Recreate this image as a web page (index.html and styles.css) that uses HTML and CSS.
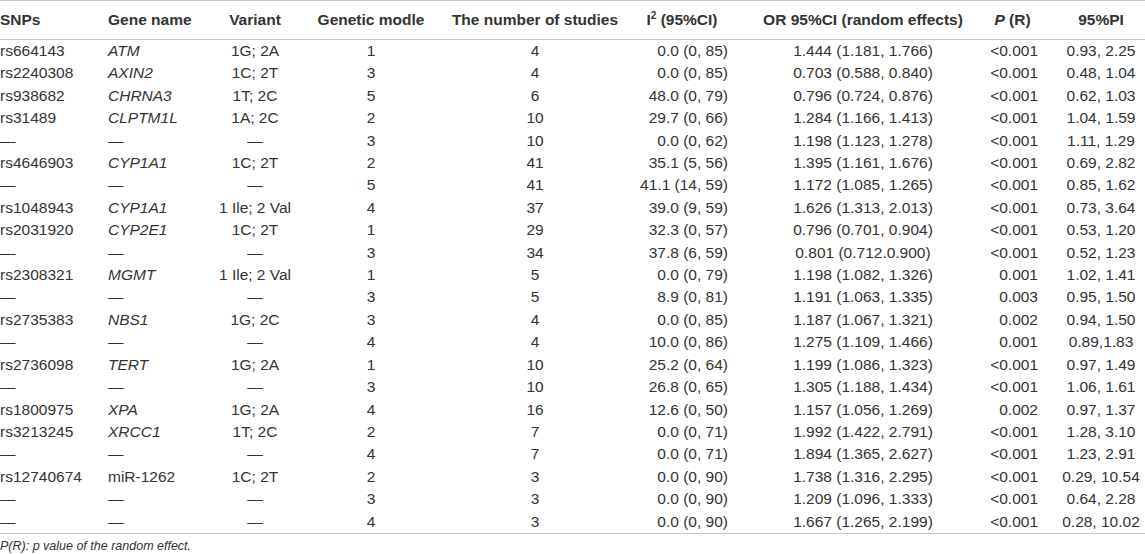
FILE: index.html
```html
<!DOCTYPE html>
<html lang="en">
<head>
    <meta charset="UTF-8">
    <meta name="viewport" content="width=device-width, initial-scale=1.0">
    <title>SNP meta-analysis</title>
    <link rel="stylesheet" href="styles.css">
</head>
<body>
    <table class="snp-table">
        <colgroup>
            <col class="c-snp">
            <col class="c-gene">
            <col class="c-variant">
            <col class="c-model">
            <col class="c-studies">
            <col class="c-i2">
            <col class="c-or">
            <col class="c-p">
            <col class="c-pi">
        </colgroup>
        <thead>
            <tr>
                <th>SNPs</th>
                <th>Gene name</th>
                <th>Variant</th>
                <th>Genetic modle</th>
                <th>The number of studies</th>
                <th>I<sup>2</sup> (95%CI)</th>
                <th>OR 95%CI (random effects)</th>
                <th><i>P</i> (R)</th>
                <th>95%PI</th>
            </tr>
        </thead>
        <tbody>
            <tr><td>rs664143</td><td><i>ATM</i></td><td>1G; 2A</td><td>1</td><td>4</td><td>0.0 (0, 85)</td><td>1.444 (1.181, 1.766)</td><td>&lt;0.001</td><td>0.93, 2.25</td></tr>
            <tr><td>rs2240308</td><td><i>AXIN2</i></td><td>1C; 2T</td><td>3</td><td>4</td><td>0.0 (0, 85)</td><td>0.703 (0.588, 0.840)</td><td>&lt;0.001</td><td>0.48, 1.04</td></tr>
            <tr><td>rs938682</td><td><i>CHRNA3</i></td><td>1T; 2C</td><td>5</td><td>6</td><td>48.0 (0, 79)</td><td>0.796 (0.724, 0.876)</td><td>&lt;0.001</td><td>0.62, 1.03</td></tr>
            <tr><td>rs31489</td><td><i>CLPTM1L</i></td><td>1A; 2C</td><td>2</td><td>10</td><td>29.7 (0, 66)</td><td>1.284 (1.166, 1.413)</td><td>&lt;0.001</td><td>1.04, 1.59</td></tr>
            <tr><td>—</td><td>—</td><td>—</td><td>3</td><td>10</td><td>0.0 (0, 62)</td><td>1.198 (1.123, 1.278)</td><td>&lt;0.001</td><td>1.11, 1.29</td></tr>
            <tr><td>rs4646903</td><td><i>CYP1A1</i></td><td>1C; 2T</td><td>2</td><td>41</td><td>35.1 (5, 56)</td><td>1.395 (1.161, 1.676)</td><td>&lt;0.001</td><td>0.69, 2.82</td></tr>
            <tr><td>—</td><td>—</td><td>—</td><td>5</td><td>41</td><td>41.1 (14, 59)</td><td>1.172 (1.085, 1.265)</td><td>&lt;0.001</td><td>0.85, 1.62</td></tr>
            <tr><td>rs1048943</td><td><i>CYP1A1</i></td><td>1 Ile; 2 Val</td><td>4</td><td>37</td><td>39.0 (9, 59)</td><td>1.626 (1.313, 2.013)</td><td>&lt;0.001</td><td>0.73, 3.64</td></tr>
            <tr><td>rs2031920</td><td><i>CYP2E1</i></td><td>1C; 2T</td><td>1</td><td>29</td><td>32.3 (0, 57)</td><td>0.796 (0.701, 0.904)</td><td>&lt;0.001</td><td>0.53, 1.20</td></tr>
            <tr><td>—</td><td>—</td><td>—</td><td>3</td><td>34</td><td>37.8 (6, 59)</td><td>0.801 (0.712.0.900)</td><td>&lt;0.001</td><td>0.52, 1.23</td></tr>
            <tr><td>rs2308321</td><td><i>MGMT</i></td><td>1 Ile; 2 Val</td><td>1</td><td>5</td><td>0.0 (0, 79)</td><td>1.198 (1.082, 1.326)</td><td>0.001</td><td>1.02, 1.41</td></tr>
            <tr><td>—</td><td>—</td><td>—</td><td>3</td><td>5</td><td>8.9 (0, 81)</td><td>1.191 (1.063, 1.335)</td><td>0.003</td><td>0.95, 1.50</td></tr>
            <tr><td>rs2735383</td><td><i>NBS1</i></td><td>1G; 2C</td><td>3</td><td>4</td><td>0.0 (0, 85)</td><td>1.187 (1.067, 1.321)</td><td>0.002</td><td>0.94, 1.50</td></tr>
            <tr><td>—</td><td>—</td><td>—</td><td>4</td><td>4</td><td>10.0 (0, 86)</td><td>1.275 (1.109, 1.466)</td><td>0.001</td><td>0.89,1.83</td></tr>
            <tr><td>rs2736098</td><td><i>TERT</i></td><td>1G; 2A</td><td>1</td><td>10</td><td>25.2 (0, 64)</td><td>1.199 (1.086, 1.323)</td><td>&lt;0.001</td><td>0.97, 1.49</td></tr>
            <tr><td>—</td><td>—</td><td>—</td><td>3</td><td>10</td><td>26.8 (0, 65)</td><td>1.305 (1.188, 1.434)</td><td>&lt;0.001</td><td>1.06, 1.61</td></tr>
            <tr><td>rs1800975</td><td><i>XPA</i></td><td>1G; 2A</td><td>4</td><td>16</td><td>12.6 (0, 50)</td><td>1.157 (1.056, 1.269)</td><td>0.002</td><td>0.97, 1.37</td></tr>
            <tr><td>rs3213245</td><td><i>XRCC1</i></td><td>1T; 2C</td><td>2</td><td>7</td><td>0.0 (0, 71)</td><td>1.992 (1.422, 2.791)</td><td>&lt;0.001</td><td>1.28, 3.10</td></tr>
            <tr><td>—</td><td>—</td><td>—</td><td>4</td><td>7</td><td>0.0 (0, 71)</td><td>1.894 (1.365, 2.627)</td><td>&lt;0.001</td><td>1.23, 2.91</td></tr>
            <tr><td>rs12740674</td><td>miR-1262</td><td>1C; 2T</td><td>2</td><td>3</td><td>0.0 (0, 90)</td><td>1.738 (1.316, 2.295)</td><td>&lt;0.001</td><td>0.29, 10.54</td></tr>
            <tr><td>—</td><td>—</td><td>—</td><td>3</td><td>3</td><td>0.0 (0, 90)</td><td>1.209 (1.096, 1.333)</td><td>&lt;0.001</td><td>0.64, 2.28</td></tr>
            <tr><td>—</td><td>—</td><td>—</td><td>4</td><td>3</td><td>0.0 (0, 90)</td><td>1.667 (1.265, 2.199)</td><td>&lt;0.001</td><td>0.28, 10.02</td></tr>
        </tbody>
    </table>
    <p class="footnote">P(R): p value of the random effect.</p>
</body>
</html>
```

FILE: styles.css
```css
body {
    margin: 0;
    background-color: #fff;
    color: #333;
    font-family: "Liberation Sans", Arial, sans-serif;
}
.snp-table {
    width: 1145px;
    border-collapse: collapse;
    table-layout: fixed;
    font-size: 15.5px;
}
.c-snp { width: 108px; }
.c-gene { width: 97px; }
.c-variant { width: 100px; }
.c-model { width: 132px; }
.c-studies { width: 196px; }
.c-i2 { width: 98px; }
.c-or { width: 244px; }
.c-p { width: 75px; }
.c-pi { width: 95px; }
.snp-table thead tr {
    border-top: 1px solid #c8c8c8;
    border-bottom: 1px solid #c8c8c8;
}
.snp-table th {
    height: 38px;
    padding: 0;
    font-weight: bold;
    text-align: center;
    white-space: nowrap;
}
.snp-table th sup {
    font-size: 10px;
    line-height: 0;
}
.snp-table tbody tr:last-child {
    border-bottom: 1px solid #c8c8c8;
}
.snp-table td {
    height: 22.4px;
    padding: 0;
    line-height: 22.4px;
    text-align: center;
    white-space: nowrap;
}
.snp-table th:nth-child(1),
.snp-table th:nth-child(2),
.snp-table td:nth-child(1),
.snp-table td:nth-child(2) {
    text-align: left;
}
.snp-table td:nth-child(6) {
    text-align: right;
    padding-right: 3px;
}
.snp-table th:nth-child(7),
.snp-table td:nth-child(7) {
    padding-left: 20px;
}
.snp-table td:nth-child(8) {
    text-align: right;
    padding-right: 12px;
}
.snp-table th:nth-child(9),
.snp-table td:nth-child(9) {
    padding-left: 7px;
}
.footnote {
    margin: 4px 0 0;
    font-size: 12.5px;
    font-style: italic;
    line-height: 16px;
}
```
